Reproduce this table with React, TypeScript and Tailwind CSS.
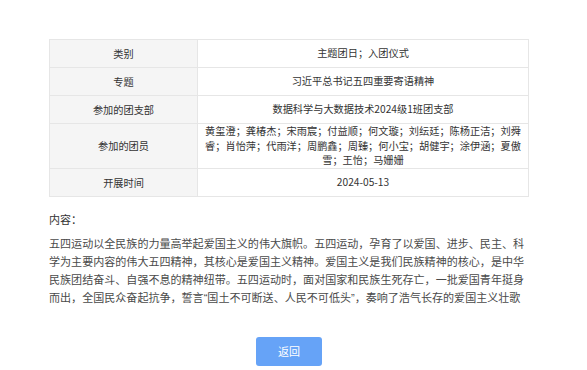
import React from "react";

const rows: { label: string; value: string; tall?: boolean }[] = [
  { label: "类别", value: "主题团日；入团仪式" },
  { label: "专题", value: "习近平总书记五四重要寄语精神" },
  { label: "参加的团支部", value: "数据科学与大数据技术2024级1班团支部" },
  {
    label: "参加的团员",
    value:
      "黄玺澄；龚椿杰；宋雨宸；付益顺；何文璇；刘纭廷；陈杨正洁；刘舜睿；肖怡萍；代雨洋；周鹏鑫；周臻；何小宝；胡健宇；涂伊涵；夏傲雪；王怡；马姗姗",
    tall: true,
  },
  { label: "开展时间", value: "2024-05-13" },
];

const q = { fontFamily: '"Liberation Sans", sans-serif' };

export default function App() {
  return (
    <div
      className="w-[587px] h-[370px] bg-white overflow-hidden"
      style={{ fontFamily: '"Noto Sans CJK SC", "Noto Sans", sans-serif' }}
    >
      <div className="ml-[49px] w-[480px] pt-[39px]">
        <table className="w-full table-fixed border-collapse border border-[#e6e6e6] text-[10.2px] text-[#333]">
          <colgroup>
            <col className="w-[148px]" />
            <col />
          </colgroup>
          <tbody>
            {rows.map((r) => (
              <tr key={r.label} className={r.tall ? "h-[45px]" : "h-[28px]"}>
                <td className="border border-[#e6e6e6] bg-[#f5f5f5] text-center align-middle p-0">
                  {r.label}
                </td>
                <td className="border border-[#e6e6e6] text-center align-middle px-[6px] py-0 leading-[14.5px]">
                  {r.value}
                </td>
              </tr>
            ))}
          </tbody>
        </table>

        <div className="mt-[13px] text-[11px] leading-[18px] text-[#333]">内容：</div>
        <p className="mt-[6px] text-[11.05px] leading-[18px] text-[#4a4a4a]">
          五四运动以全民族的力量高举起爱国主义的伟大旗帜。五四运动，孕育了以爱国、进步、民主、科学为主要内容的伟大五四精神，其核心是爱国主义精神。爱国主义是我们民族精神的核心，是中华民族团结奋斗、自强不息的精神纽带。五四运动时，面对国家和民族生死存亡，一批爱国青年挺身而出，全国民众奋起抗争，誓言
          <span style={q}>“</span>国土不可断送、人民不可低头<span style={q}>”</span>，奏响了浩气长存的爱国主义壮歌
        </p>

        <div className="mt-[30px] flex justify-center">
          <button className="w-[66px] h-[29px] rounded-[3px] bg-[#66a3f7] text-white text-[11px]">
            返回
          </button>
        </div>
      </div>
    </div>
  );
}
